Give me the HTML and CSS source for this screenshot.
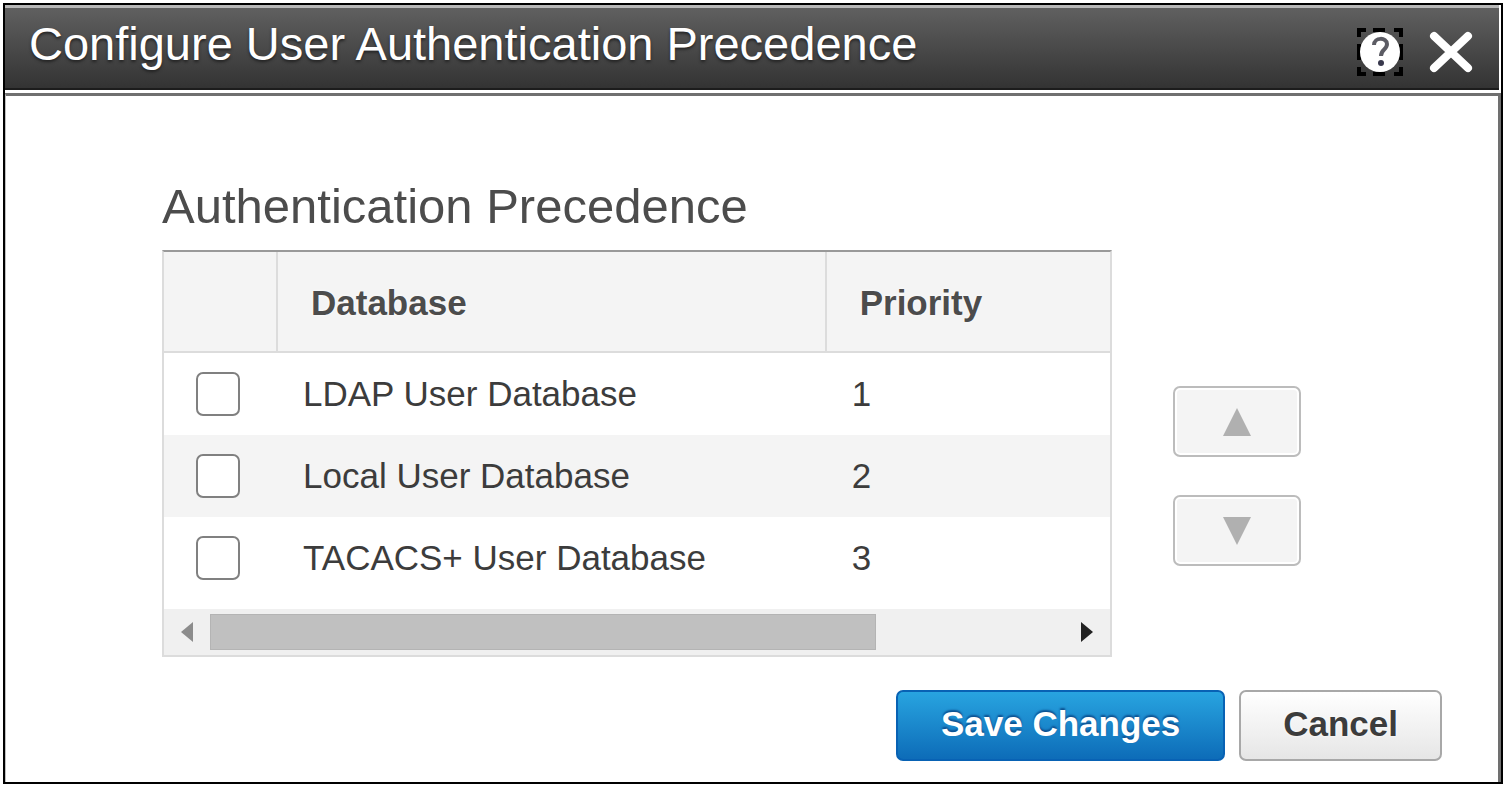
FILE: index.html
```html
<!DOCTYPE html>
<html lang="en">
<head>
    <meta charset="UTF-8">
    <meta name="viewport" content="width=device-width, initial-scale=1.0">
    <title>Configure User Authentication Precedence</title>
    <link rel="stylesheet" href="styles.css">
</head>
<body>
    <div class="dialog">
        <div class="dialog-header">
            <h1>Configure User Authentication Precedence</h1>
            <div class="header-actions">
                <button class="icon-button help-button" aria-label="Help">
                    <svg width="46" height="48" viewBox="0 0 46 48">
                        <path d="M2 9V2h7M16 2h12M37 2h7v7M44 16v16M44 39v7h-7M28 46H16M9 46H2v-7M2 32V16" fill="none" stroke="#000" stroke-width="4"/>
                        <circle cx="23" cy="24" r="20" fill="#fff"/>
                        <path d="M17 17c0-8 13-8 13-1 0 6-6 5-6 12" fill="none" stroke="#5c5c64" stroke-width="4"/>
                        <circle cx="24" cy="35" r="3" fill="#38384c"/>
                    </svg>
                </button>
                <button class="icon-button" aria-label="Close">
                    <svg width="44" height="42" viewBox="0 0 44 42">
                        <path d="M5 5L39 37M39 5L5 37" stroke="#fff" stroke-width="8" stroke-linecap="round"/>
                    </svg>
                </button>
            </div>
        </div>

        <div class="dialog-body">
            <h2>Authentication Precedence</h2>
            <div class="precedence">
                <div class="table-box">
                    <table>
                        <thead>
                            <tr>
                                <th class="col-check"></th>
                                <th class="col-database">Database</th>
                                <th>Priority</th>
                            </tr>
                        </thead>
                        <tbody>
                            <tr>
                                <td><input type="checkbox" id="ldap"></td>
                                <td><label for="ldap">LDAP User Database</label></td>
                                <td>1</td>
                            </tr>
                            <tr>
                                <td><input type="checkbox" id="local"></td>
                                <td><label for="local">Local User Database</label></td>
                                <td>2</td>
                            </tr>
                            <tr>
                                <td><input type="checkbox" id="tacacs"></td>
                                <td><label for="tacacs">TACACS+ User Database</label></td>
                                <td>3</td>
                            </tr>
                        </tbody>
                    </table>
                    <div class="scrollbar">
                        <button class="scroll-arrow" aria-label="Scroll left">
                            <svg width="12" height="20" viewBox="0 0 12 20"><path d="M12 0v20L0 10z" fill="#8c8c8c"/></svg>
                        </button>
                        <div class="scroll-track">
                            <div class="scroll-thumb"></div>
                        </div>
                        <button class="scroll-arrow" aria-label="Scroll right">
                            <svg width="12" height="20" viewBox="0 0 12 20"><path d="M0 0v20L12 10z" fill="#222"/></svg>
                        </button>
                    </div>
                </div>
                <div class="order-buttons">
                    <button class="order-button" aria-label="Move up" disabled>
                        <svg width="28" height="28" viewBox="0 0 28 28"><path d="M0 28h28L14 0z" fill="#b0b0b0"/></svg>
                    </button>
                    <button class="order-button" aria-label="Move down" disabled>
                        <svg width="28" height="28" viewBox="0 0 28 28"><path d="M0 0h28L14 28z" fill="#b0b0b0"/></svg>
                    </button>
                </div>
            </div>
            <div class="dialog-footer">
                <button class="button primary">Save Changes</button>
                <button class="button">Cancel</button>
            </div>
        </div>
    </div>
</body>
</html>
```
FILE: styles.css
```css
* {
    box-sizing: border-box;
}
body {
    margin: 0;
    padding: 3px;
    background-color: #fff;
    font-family: "Liberation Sans", Arial, sans-serif;
    font-size: 35px;
    color: #3c3c3c;
}
button {
    font-family: inherit;
    cursor: pointer;
}
svg {
    display: block;
}
.dialog {
    display: flex;
    flex-direction: column;
    min-height: calc(100vh - 6px);
    border: 2px solid #000;
}
.dialog-header {
    display: flex;
    justify-content: space-between;
    align-items: flex-start;
    height: 85px;
    margin-right: 2px;
    padding: 8px 26px 0 24px;
    border-top: 3px solid #b8b8b8;
    border-bottom: 2px solid #1c1c1c;
    background: linear-gradient(#606060, #333);
}
h1 {
    margin: 0;
    font-size: 47px;
    line-height: 56px;
    font-weight: normal;
    color: #fff;
    text-shadow: 0 2px 3px #222;
}
.header-actions {
    display: flex;
    align-items: center;
    gap: 26px;
    padding-top: 12px;
}
.icon-button {
    padding: 0;
    border: none;
    background: none;
}
.dialog-body {
    flex: 1;
    margin-top: 3px;
    padding: 82px 56px 20px 156px;
    border-top: 3px solid #707070;
    border-left: 1px solid #c0c0c0;
    border-right: 3px solid #707070;
}
h2 {
    margin: 0 0 15px;
    font-size: 49px;
    line-height: 57px;
    font-weight: normal;
    color: #4c4c4c;
}
.precedence {
    display: flex;
    gap: 61px;
    padding-right: 141px;
}
.table-box {
    flex: 1;
    border: 2px solid #dcdcdc;
    border-top: 2px solid #999;
}
table {
    width: 100%;
    margin-bottom: 10px;
    table-layout: fixed;
    border-collapse: separate;
    border-spacing: 0;
}
th {
    height: 101px;
    padding: 2px 0 0 33px;
    background-color: #f4f4f4;
    border-bottom: 2px solid #dcdcdc;
    border-left: 2px solid #dcdcdc;
    color: #4c4c4c;
    text-align: left;
    text-shadow: 0 0 3px #fff;
}
th:first-child {
    border-left: none;
}
.col-check {
    width: 112px;
}
.col-database {
    width: 58%;
}
td {
    height: 82px;
    padding: 0 0 0 27px;
}
td:first-child {
    padding-left: 32px;
}
tbody tr:nth-child(even) {
    background-color: #f4f4f4;
}
input[type="checkbox"] {
    appearance: none;
    display: block;
    width: 44px;
    height: 44px;
    margin: 0;
    border: 2px solid #808080;
    border-radius: 7px;
    background-color: #fff;
}
.scrollbar {
    display: flex;
    height: 46px;
    background-color: #f0f0f0;
}
.scroll-arrow {
    display: flex;
    justify-content: center;
    align-items: center;
    width: 46px;
    padding: 0;
    border: none;
    background: none;
}
.scroll-track {
    flex: 1;
    padding: 5px 0;
}
.scroll-thumb {
    width: 78%;
    height: 36px;
    background-color: #c0c0c0;
    border: 1px solid #b4b4b4;
}
.order-buttons {
    display: flex;
    flex-direction: column;
    gap: 38px;
    padding-top: 136px;
}
.order-button {
    display: flex;
    justify-content: center;
    align-items: center;
    width: 128px;
    height: 71px;
    border: 2px solid #bcbcbc;
    border-radius: 7px;
    background-color: #f4f4f4;
    box-shadow: inset 0 0 0 2px #fff;
}
.dialog-footer {
    display: flex;
    justify-content: flex-end;
    gap: 14px;
    margin-top: 33px;
}
.button {
    height: 71px;
    padding: 0 42px 4px;
    border: 2px solid #a8a8a8;
    border-radius: 7px;
    background: linear-gradient(#fff, #e6e6e6);
    color: #3c3c3c;
    font-size: 35px;
    font-weight: bold;
    text-shadow: 0 0 3px #fff;
}
.button.primary {
    padding: 0 43px 4px;
    border-color: #0862b4;
    background: linear-gradient(#28a4e0, #0d6cb8);
    color: #fff;
    text-shadow: 0 -2px 2px #0c5090;
}
```
